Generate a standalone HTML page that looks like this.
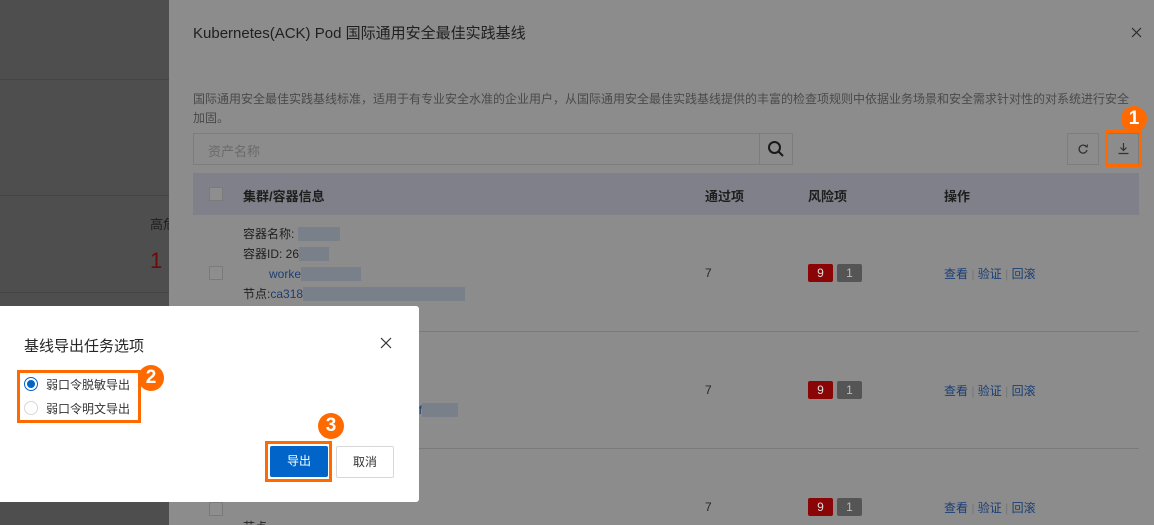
<!DOCTYPE html>
<html><head><meta charset="utf-8"><style>
*{margin:0;padding:0;box-sizing:border-box}
html{width:1154px;height:525px;overflow:hidden;background:#4e4e4e}
body{width:1154px;height:525px;overflow:hidden;position:relative;background:#4e4e4e;font-family:"Liberation Sans","Noto Sans CJK SC",sans-serif;color:#262626}
.a{position:absolute;white-space:nowrap}
.drawer{position:absolute;left:169px;top:0;width:985px;height:525px;background:#8c8c8c}
.hl{position:absolute;height:1px;background:#7a7a7a}
.cb{position:absolute;width:14px;height:14px;border:1px solid #7a7a7a;background:#8e8e8e;border-radius:1px}
.lk{color:#1a3e74}
.bl{background:#7a808a;color:transparent}
.bd{position:absolute;width:26px;height:26px;border-radius:50%;background:#ff6a00;color:#fff;font-weight:bold;font-size:19px;text-align:center;line-height:26px}
.ob{position:absolute;border:3px solid #ff6a00}
</style></head><body>
<div class="hl" style="left:0;top:79px;width:169px;background:#444"></div>
<div class="hl" style="left:0;top:195px;width:169px;background:#444"></div>
<div class="hl" style="left:0;top:292px;width:169px;background:#444"></div>
<div class="a" style="left:150px;top:214px;font-size:13px;color:#1e1e1e">高危</div>
<div class="a" style="left:150px;top:248px;font-size:22px;color:#6e0a0a">1</div>

<div class="drawer"></div>
<div class="a" style="left:193px;top:22px;font-size:15px;color:#202020">Kubernetes(ACK) Pod 国际通用安全最佳实践基线</div>
<svg class="a" style="left:1131px;top:27px" width="11" height="11" viewBox="0 0 11 11"><path d="M1 1L10 10M10 1L1 10" stroke="#2a2a2a" stroke-width="1.2"/></svg>
<div class="a" style="left:193px;top:90px;font-size:12px;color:#4a4a4a;line-height:19px">国际通用安全最佳实践基线标准，适用于有专业安全水准的企业用户，从国际通用安全最佳实践基线提供的丰富的检查项规则中依据业务场景和安全需求针对性的对系统进行安全<br>加固。</div>
<div class="a" style="left:193px;top:133px;width:600px;height:32px;border:1px solid #7d7d7d"></div>
<div class="a" style="left:759px;top:133px;width:34px;height:32px;border:1px solid #7d7d7d"></div>
<div class="a" style="left:208px;top:141px;font-size:13px;color:#6a6a6a">资产名称</div>
<svg class="a" style="left:767px;top:140px" width="18" height="18" viewBox="0 0 18 18"><circle cx="7.5" cy="7.5" r="5.5" fill="none" stroke="#1a1a1a" stroke-width="2"/><path d="M11.5 11.5L16 16" stroke="#1a1a1a" stroke-width="2"/></svg>
<div class="a" style="left:1067px;top:133px;width:32px;height:32px;border:1px solid #7d7d7d"></div>
<div class="a" style="left:1107px;top:133px;width:32px;height:32px;border:1px solid #7d7d7d"></div>
<svg class="a" style="left:1077px;top:143px" width="12" height="12" viewBox="0 0 12 12"><path d="M9.5 4A4 4 0 1 0 10 7" fill="none" stroke="#333" stroke-width="1.3"/><path d="M8 2.5L10 4L10.5 1.5" fill="none" stroke="#333" stroke-width="1.2"/></svg>
<svg class="a" style="left:1117px;top:142px" width="13" height="13" viewBox="0 0 13 13"><path d="M6.5 1V8M3.5 5.5L6.5 8.5L9.5 5.5M1.5 11.5H11.5" fill="none" stroke="#333" stroke-width="1.2"/></svg>
<div class="ob" style="left:1105px;top:130px;width:37px;height:37px"></div>
<div class="bd" style="left:1121px;top:106px">1</div>

<div class="a" style="left:193px;top:173px;width:946px;height:42px;background:#7f8089"></div>
<div class="cb" style="left:209px;top:187px"></div>
<div class="a" style="left:243px;top:186px;font-size:13px;font-weight:bold;color:#1e1e1e">集群/容器信息</div>
<div class="a" style="left:705px;top:186px;font-size:13px;font-weight:bold;color:#1e1e1e">通过项</div>
<div class="a" style="left:808px;top:186px;font-size:13px;font-weight:bold;color:#1e1e1e">风险项</div>
<div class="a" style="left:944px;top:186px;font-size:13px;font-weight:bold;color:#1e1e1e">操作</div>

<div class="a" style="left:243px;top:224px;font-size:12px;line-height:20px;color:#1e1e1e">容器名称: <span class="bl">kibanad</span><br>容器ID: 26<span class="bl">xxxxx</span><br><span class="lk" style="padding-left:26px">worke<span class="bl">xxxxxxxxxx</span></span><br>节点:<span class="lk">ca318<span class="bl">xxxxxxxxxxxxxxxxxxxxxxxxxxx</span></span></div>
<div class="cb" style="left:209px;top:266px"></div>

<div class="hl" style="left:193px;top:331px;width:946px"></div>
<div class="hl" style="left:193px;top:448px;width:946px"></div>
<div class="a" style="left:412px;top:403px;font-size:12px"><span class="lk">8f<span class="bl">xxxxxx</span></span></div>
<div class="cb" style="left:209px;top:502px"></div>
<div class="a" style="left:243px;top:518px;font-size:12px">节点</div>

<div class="a" style="left:705px;top:266px;font-size:12px">7</div>
<div class="a" style="left:705px;top:383px;font-size:12px">7</div>
<div class="a" style="left:705px;top:500px;font-size:12px">7</div>
<div class="a" style="left:808px;top:264px;width:25px;height:18px;background:#8a0505;color:#ddd;font-size:12px;text-align:center;line-height:18px;border-radius:2px">9</div>
<div class="a" style="left:837px;top:264px;width:25px;height:18px;background:#555;color:#bbb;font-size:12px;text-align:center;line-height:18px;border-radius:2px">1</div>
<div class="a" style="left:808px;top:381px;width:25px;height:18px;background:#8a0505;color:#ddd;font-size:12px;text-align:center;line-height:18px;border-radius:2px">9</div>
<div class="a" style="left:837px;top:381px;width:25px;height:18px;background:#555;color:#bbb;font-size:12px;text-align:center;line-height:18px;border-radius:2px">1</div>
<div class="a" style="left:808px;top:498px;width:25px;height:18px;background:#8a0505;color:#ddd;font-size:12px;text-align:center;line-height:18px;border-radius:2px">9</div>
<div class="a" style="left:837px;top:498px;width:25px;height:18px;background:#555;color:#bbb;font-size:12px;text-align:center;line-height:18px;border-radius:2px">1</div>
<div class="a lk" style="left:944px;top:265px;font-size:12px">查看 <span style="color:#777">|</span> 验证 <span style="color:#777">|</span> 回滚</div>
<div class="a lk" style="left:944px;top:382px;font-size:12px">查看 <span style="color:#777">|</span> 验证 <span style="color:#777">|</span> 回滚</div>
<div class="a lk" style="left:944px;top:499px;font-size:12px">查看 <span style="color:#777">|</span> 验证 <span style="color:#777">|</span> 回滚</div>

<div class="a" style="left:0;top:306px;width:419px;height:196px;background:#fff;border-radius:0 3px 3px 0"></div>
<div class="a" style="left:24px;top:335px;font-size:15px;color:#262626">基线导出任务选项</div>
<svg class="a" style="left:380px;top:337px" width="12" height="12" viewBox="0 0 12 12"><path d="M1 1L11 11M11 1L1 11" stroke="#333" stroke-width="1.2"/></svg>
<div class="a" style="left:24px;top:377px;width:14px;height:14px;border-radius:50%;border:1px solid #0064c8"><div style="margin:2px;width:8px;height:8px;border-radius:50%;background:#0064c8"></div></div>
<div class="a" style="left:24px;top:401px;width:14px;height:14px;border-radius:50%;border:1px solid #d8d8d8"></div>
<div class="a" style="left:46px;top:376px;font-size:12px;color:#333">弱口令脱敏导出</div>
<div class="a" style="left:46px;top:400px;font-size:12px;color:#333">弱口令明文导出</div>
<div class="ob" style="left:17px;top:370px;width:124px;height:53px"></div>
<div class="bd" style="left:138px;top:365px">2</div>
<div class="a" style="left:270px;top:446px;width:58px;height:31px;background:#0064c8;color:#fff;font-size:12px;text-align:center;line-height:31px;border-radius:2px">导出</div>
<div class="ob" style="left:265px;top:441px;width:67px;height:41px"></div>
<div class="a" style="left:336px;top:446px;width:58px;height:32px;border:1px solid #d8d8d8;color:#333;font-size:12px;text-align:center;line-height:30px;border-radius:2px">取消</div>
<div class="bd" style="left:318px;top:413px">3</div>
</body></html>
